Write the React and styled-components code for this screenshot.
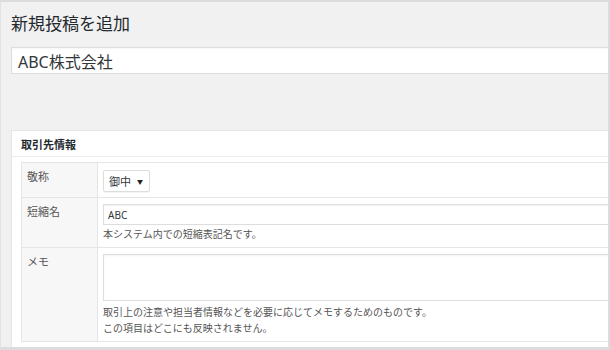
import React from "react";
import styled, { createGlobalStyle } from "styled-components";

const Global = createGlobalStyle`
  html, body { margin: 0; padding: 0; background: #f1f1f1; }
  body { font-family: "Noto Sans", "Noto Sans CJK JP", sans-serif; }
  * { box-sizing: border-box; }
`;

const Frame = styled.div`
  width: 610px;
  height: 350px;
  overflow: hidden;
  background: #f1f1f1;
  border-top: 2px solid #dcdcdc;
  border-right: 2px solid #dcdcdc;
  border-bottom: 3px solid #dcdcdc;
  border-left: 1px solid #e2e2e2;
`;

const Wrap = styled.div`
  width: 720px;
  padding: 11px 0 0 10px;
`;

const Title = styled.h1`
  margin: 0;
  font-size: 17px;
  line-height: 22px;
  font-weight: 400;
  color: #23282d;
`;

const TitleInput = styled.div`
  margin-top: 12px;
  height: 27px;
  background: #fff;
  border: 1px solid #dddddd;
  box-shadow: inset 0 1px 2px rgba(0, 0, 0, 0.04);
  padding: 0 6px;
  display: flex;
  align-items: center;
  font-size: 16px;
  color: #32373c;
`;

const Postbox = styled.section`
  margin-top: 56px;
  background: #fff;
  border: 1px solid #e5e5e5;
  box-shadow: 0 1px 1px rgba(0, 0, 0, 0.04);
  padding-bottom: 12px;
`;

const PostboxHeader = styled.h2`
  margin: 0;
  height: 26px;
  padding: 0 9px;
  display: flex;
  align-items: center;
  font-size: 11px;
  font-weight: 700;
  color: #23282d;
  border-bottom: 1px solid #eeeeee;
`;

const Inside = styled.div`
  padding: 5px 9px 0 9px;
`;

const Table = styled.table`
  width: 100%;
  border-collapse: collapse;
  border: 1px solid #e5e5e5;
`;

const Row = styled.tr`
  border-bottom: 1px solid #e5e5e5;
`;

const Label = styled.th`
  width: 76px;
  background: #f7f7f7;
  border-right: 1px solid #e5e5e5;
  padding: 6px 5px;
  text-align: left;
  vertical-align: top;
  font-size: 11px;
  line-height: 16px;
  font-weight: 400;
  color: #555;
`;

const Cell = styled.td`
  padding: 6px 5px 5px 5px;
  vertical-align: top;
`;

const Select = styled.div`
  display: inline-flex;
  align-items: center;
  gap: 6px;
  height: 22px;
  margin-top: -1px;
  padding: 0 6px 0 5px;
  background: #fff;
  border: 1px solid #dddddd;
  border-radius: 2px;
  box-shadow: 0 1px 1px rgba(0, 0, 0, 0.05);
  font-size: 11px;
  color: #32373c;
`;

const Caret = styled.span`
  font-size: 6px;
  color: #222;
`;

const TextInput = styled.div`
  height: 21px;
  background: #fff;
  border: 1px solid #dddddd;
  box-shadow: inset 0 1px 2px rgba(0, 0, 0, 0.05);
  padding: 0 4px;
  display: flex;
  align-items: center;
  font-size: 10px;
  color: #32373c;
`;

const TextArea = styled.div`
  height: 47px;
  background: #fff;
  border: 1px solid #dddddd;
  box-shadow: inset 0 1px 2px rgba(0, 0, 0, 0.05);
  margin-bottom: 3px;
`;

const Description = styled.p`
  margin: 1px 0 0;
  font-size: 10px;
  line-height: 16px;
  color: #555;
`;

export default function App() {
  return (
    <>
      <Global />
      <Frame>
        <Wrap>
          <Title>新規投稿を追加</Title>
          <TitleInput>ABC株式会社</TitleInput>
          <Postbox>
            <PostboxHeader>取引先情報</PostboxHeader>
            <Inside>
              <Table>
                <tbody>
                  <Row>
                    <Label>敬称</Label>
                    <Cell>
                      <Select>
                        御中<Caret>▼</Caret>
                      </Select>
                    </Cell>
                  </Row>
                  <Row>
                    <Label>短縮名</Label>
                    <Cell>
                      <TextInput>ABC</TextInput>
                      <Description>本システム内での短縮表記名です。</Description>
                    </Cell>
                  </Row>
                  <Row>
                    <Label>メモ</Label>
                    <Cell>
                      <TextArea />
                      <Description>
                        取引上の注意や担当者情報などを必要に応じてメモするためのものです。
                        <br />
                        この項目はどこにも反映されません。
                      </Description>
                    </Cell>
                  </Row>
                </tbody>
              </Table>
            </Inside>
          </Postbox>
        </Wrap>
      </Frame>
    </>
  );
}
